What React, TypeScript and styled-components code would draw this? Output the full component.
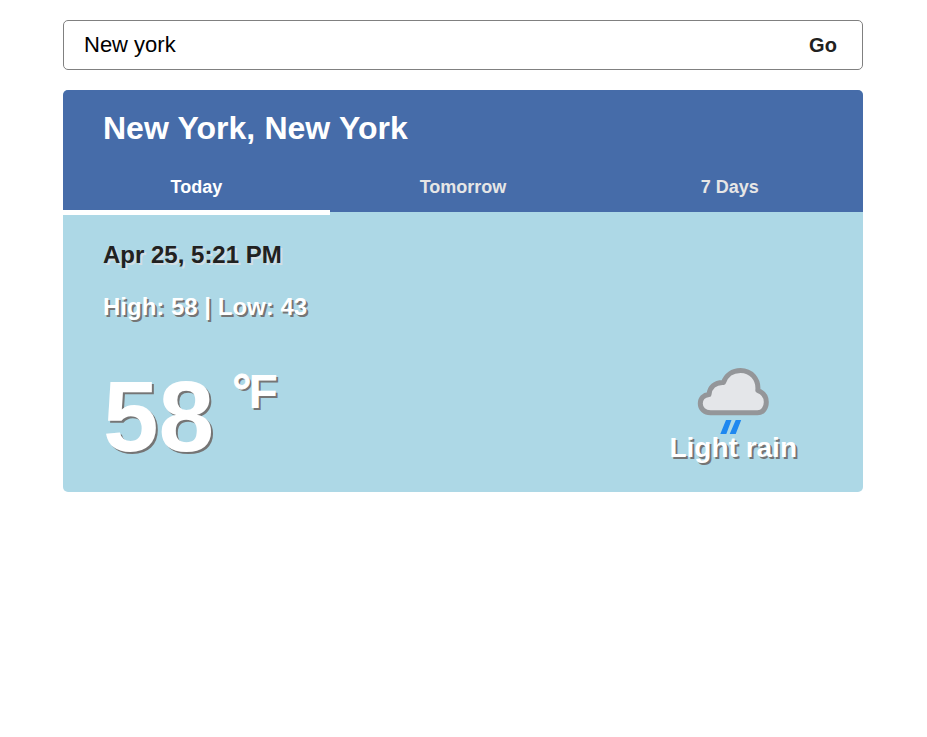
import React, { useState } from "react";
import styled, { createGlobalStyle } from "styled-components";

const GlobalStyle = createGlobalStyle`
  * { box-sizing: border-box; }
  body {
    margin: 0;
    background: #fff;
    color: #212121;
    font-family: "Liberation Sans", Arial, sans-serif;
  }
`;

const Page = styled.main`
  width: 800px;
  margin: 20px 0 0 63px;
  display: flex;
  flex-direction: column;
  gap: 20px;
`;

const SearchForm = styled.form`
  display: flex;
  height: 50px;
  border: 1px solid #808080;
  border-radius: 5px;
  overflow: hidden;
`;

const SearchInput = styled.input`
  flex: 1;
  min-width: 0;
  border: 0;
  outline: 0;
  padding: 0 20px;
  background: transparent;
  color: #000;
  font: 22px "Liberation Sans", Arial, sans-serif;
`;

const SearchButton = styled.button`
  width: 78px;
  border: 0;
  padding: 0;
  background: transparent;
  color: #212121;
  font: bold 20px "Liberation Sans", Arial, sans-serif;
`;

const Card = styled.section`
  height: 402px;
  border-radius: 5px;
  background: lightblue;
  display: flex;
  flex-direction: column;
`;

const CardHeader = styled.header`
  height: 122px;
  border-radius: 5px 5px 0 0;
  background: #466ca9;
  display: flex;
  flex-direction: column;
`;

const City = styled.h1`
  margin: 0;
  padding: 0 40px;
  height: 72px;
  line-height: 76px;
  font-size: 32px;
  word-spacing: 0.4px;
  color: #fff;
`;

const Tabs = styled.nav`
  display: grid;
  grid-template-columns: repeat(3, 1fr);
  height: 50px;
`;

const Tab = styled.button<{ $active: boolean }>`
  height: 53px;
  border: 0;
  border-bottom: 5px solid ${(p) => (p.$active ? "#fff" : "transparent")};
  padding: 2px 0 0;
  background: transparent;
  color: ${(p) => (p.$active ? "#fff" : "#e6e6e6")};
  font: bold 18px "Liberation Sans", Arial, sans-serif;
  line-height: 20px;
`;

const Details = styled.div`
  padding: 29px 40px 0;
  font-weight: bold;
`;

const DateLine = styled.p`
  margin: 0;
  font-size: 24px;
  line-height: 28px;
  text-shadow: 2px 2px #d3dfe4;
`;

const Range = styled.p`
  margin: 24px 0 0;
  font-size: 24px;
  line-height: 28px;
  color: #fff;
  text-shadow: 2px 2px #757575;
`;

const Conditions = styled.div`
  display: flex;
  justify-content: space-between;
  align-items: flex-start;
  margin-top: 41px;
  padding-right: 26px;
  color: #fff;
  text-shadow: 2px 2px #757575;
`;

const Temperature = styled.div`
  display: flex;
  align-items: flex-start;
  gap: 18px;
`;

const Degrees = styled.span`
  font-size: 100px;
  line-height: 108px;
`;

const Unit = styled.span`
  font-size: 48px;
  line-height: 56px;
  margin-top: 2px;
`;

const DegreeSign = styled.span`
  letter-spacing: -3px;
  -webkit-text-stroke: 0.8px #fff;
`;

const Summary = styled.div`
  display: flex;
  flex-direction: column;
  align-items: center;
  font-size: 28px;
  line-height: 32px;
`;

const CloudIcon = styled.svg`
  display: block;
  width: 86px;
  height: 80px;
  margin: 0 0 -10px;
`;

const TABS = ["Today", "Tomorrow", "7 Days"];

function LightRain() {
  return (
    <CloudIcon viewBox="0 0 86 80">
      <path
        d="M20.5 50.8 H67.5 C73 50.8 76.3 46 76.3 40 C76.3 34.5 73 30.5 67.8 28.5 C69 17 61 8.5 50.5 8.5 C42.5 8.5 36 13 33.5 20.5 C25 20 19.5 25.5 19 32.5 C13.5 33 10.3 36.5 10.3 41.5 C10.3 47 14.5 50.8 20.5 50.8 Z"
        fill="#e4e6e9"
        stroke="#949699"
        strokeWidth="5"
        strokeLinejoin="round"
      />
      <path d="M36 58 H41.5 L36.3 72 H30.3 Z M45.7 58 H51.2 L45.7 72 H39.7 Z" fill="#1e88f0" />
    </CloudIcon>
  );
}

export default function App() {
  const [query, setQuery] = useState("New york");
  const [active, setActive] = useState("Today");

  return (
    <>
      <GlobalStyle />
      <Page>
        <SearchForm onSubmit={(e) => e.preventDefault()}>
          <SearchInput value={query} onChange={(e) => setQuery(e.target.value)} />
          <SearchButton type="submit">Go</SearchButton>
        </SearchForm>
        <Card>
          <CardHeader>
            <City>New York, New York</City>
            <Tabs>
              {TABS.map((name) => (
                <Tab key={name} $active={name === active} onClick={() => setActive(name)}>
                  {name}
                </Tab>
              ))}
            </Tabs>
          </CardHeader>
          <Details>
            <DateLine>Apr 25, 5:21 PM</DateLine>
            <Range>High: 58 | Low: 43</Range>
            <Conditions>
              <Temperature>
                <Degrees>58</Degrees>
                <Unit><DegreeSign>°</DegreeSign>F</Unit>
              </Temperature>
              <Summary>
                <LightRain />
                <span>Light rain</span>
              </Summary>
            </Conditions>
          </Details>
        </Card>
      </Page>
    </>
  );
}
